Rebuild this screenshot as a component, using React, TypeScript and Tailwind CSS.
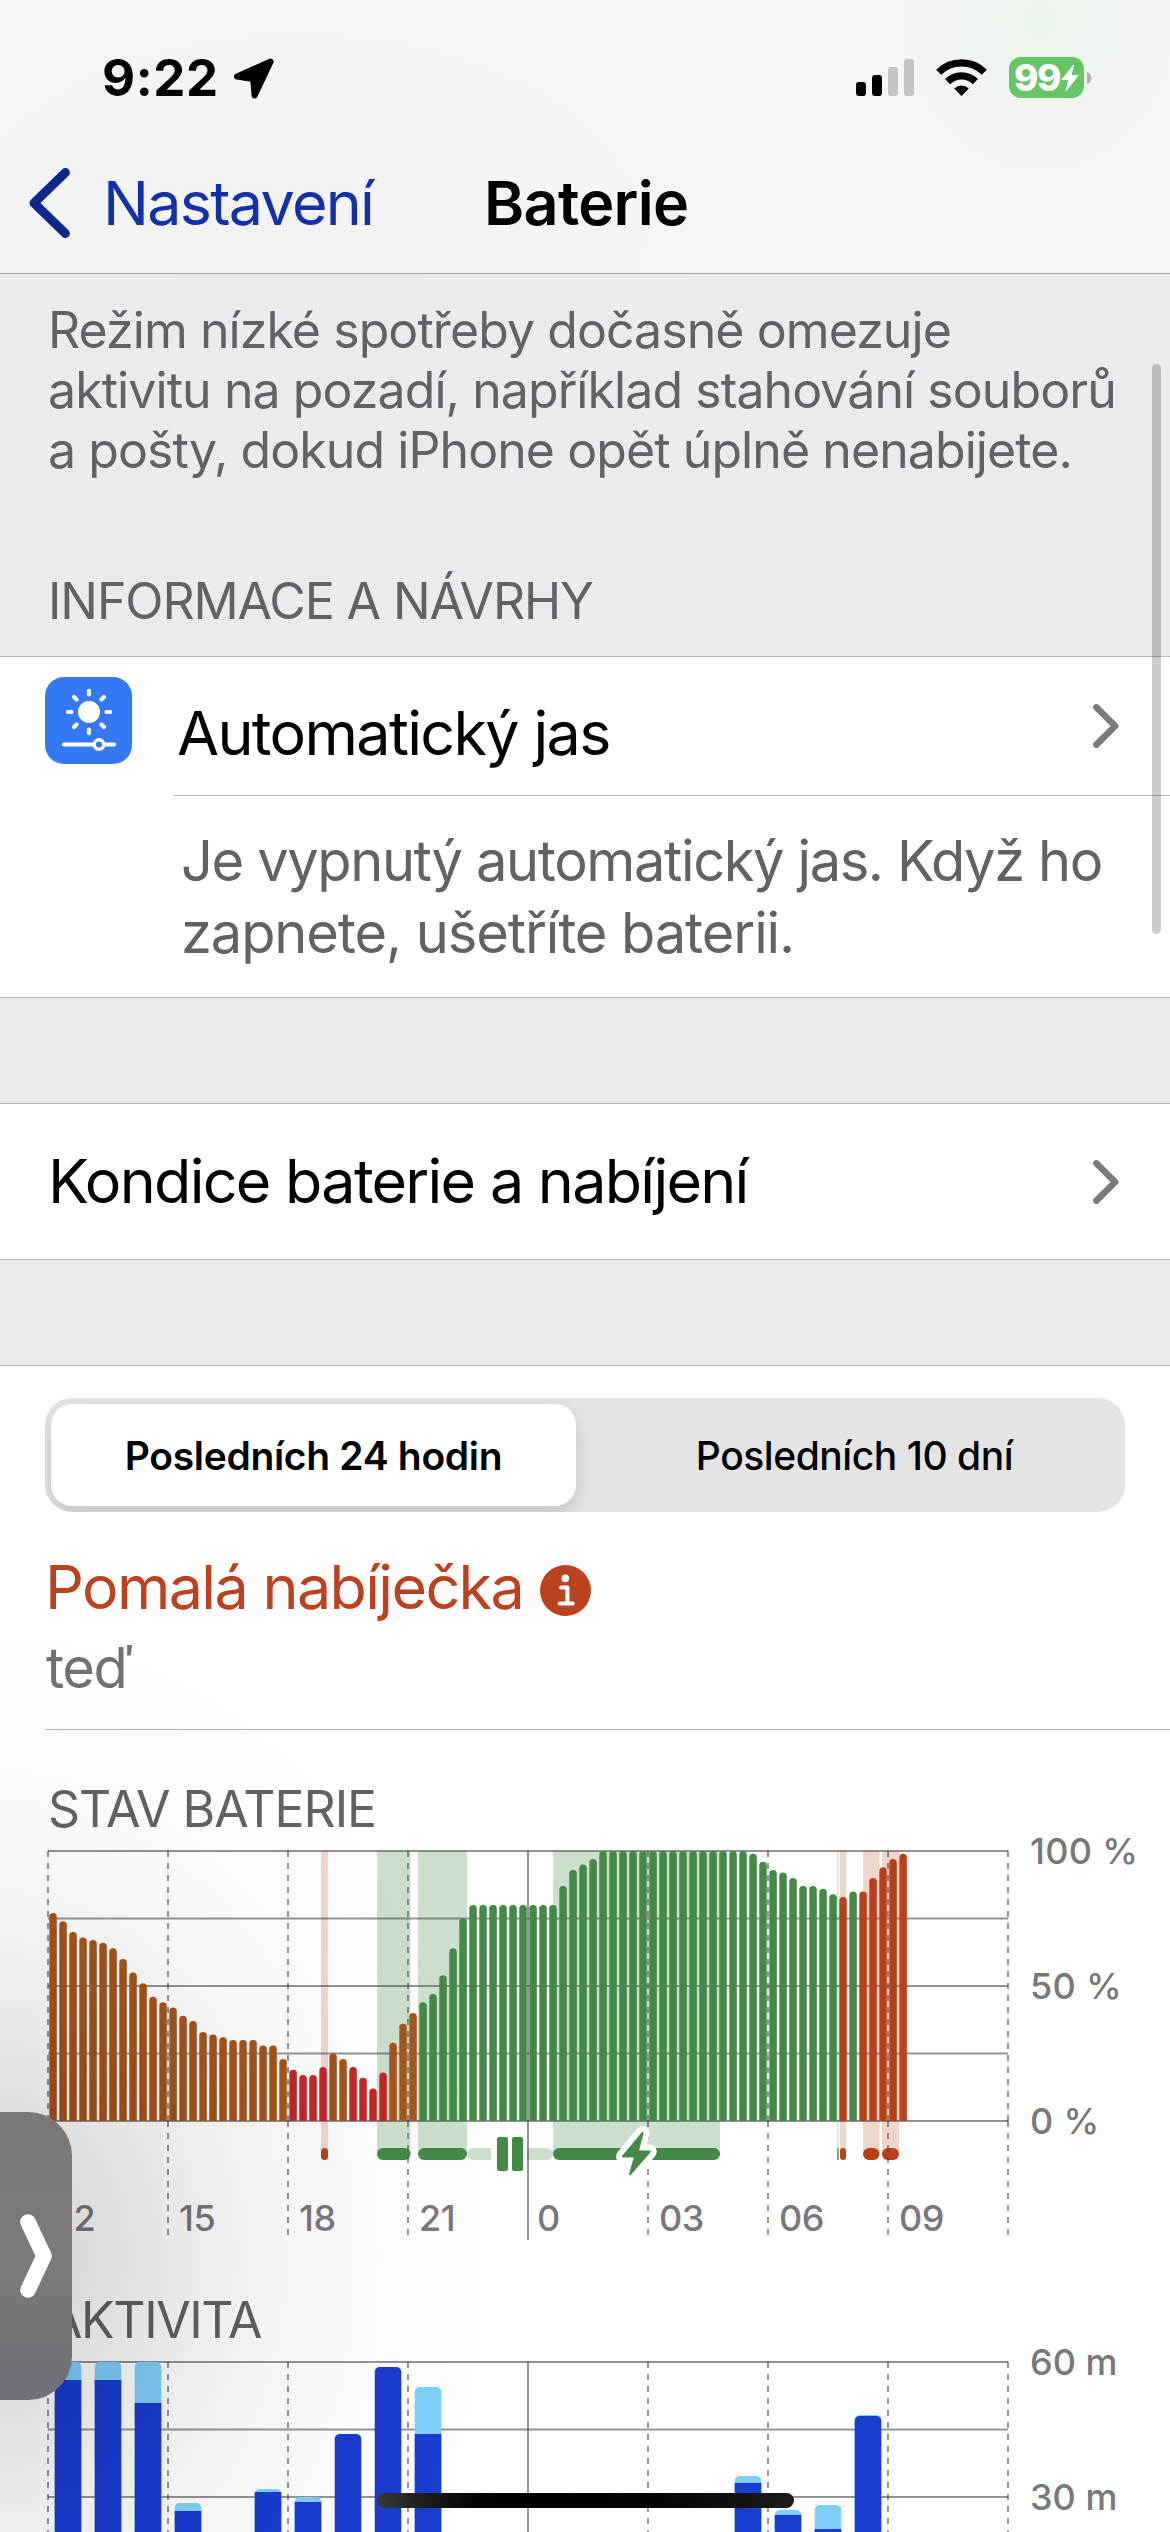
import { clsx } from "clsx";

const GREEN = "#448947";
const BROWN = "#a5541c";
const RED = "#c42726";
const RUST = "#ba401b";

const LEFT = 48;
const RIGHT = 1008;
const HOUR = 40;
const TOP = 12;
const PLOT_H = 270;
const BASE = TOP + PLOT_H;

const BOLT = "M642.6 294 623 317.4h12l-5 18 19.8-22.8h-12z";

// battery level in percent, one sample per 15 minutes
const levels = [
  77, 74, 70, 68, 67, 66, 64, 60, 55, 51, 46, 44, 42, 39, 37, 33, 32, 31, 30, 30, 30, 28, 28, 23,
  19, 17, 17, 20, 25, 23, 20, 16, 12, 18, 29, 36, 40, 44, 47, 54, 64, 75,
  80, 80, 80, 80, 80, 80, 80, 80, 80, 87, 93, 95, 97,
  100, 100, 100, 100, 100, 100, 100, 100, 100, 100, 100, 100, 100, 100, 100,
  99, 96, 93, 92, 90, 87, 87, 86, 84, 83, 85, 85, 90, 94, 97, 99,
];

const levelColor = (i: number) => {
  if (i === 79 || i >= 81) return RUST;
  if (i >= 37) return GREEN;
  if ((i >= 24 && i <= 27) || (i >= 30 && i <= 33)) return RED;
  return BROWN;
};

const charging = [
  { x: 321, w: 7, color: RUST },
  { x: 377, w: 33.5, color: GREEN },
  { x: 418, w: 49, color: GREEN },
  { x: 553, w: 167, color: GREEN },
  { x: 840, w: 6, color: RUST },
  { x: 863, w: 16.5, color: RUST },
  { x: 882, w: 17, color: RUST },
];

const hours = ["12", "15", "18", "21", "0", "03", "06", "09"];

// distance of the bar's top and of the dark part's top from the 60 m line
const activity = [
  { hour: 0, top: 0, dark: 18 },
  { hour: 1, top: 0, dark: 18 },
  { hour: 2, top: 0, dark: 41 },
  { hour: 3, top: 141, dark: 149 },
  { hour: 5, top: 127, dark: 130 },
  { hour: 6, top: 135, dark: 140 },
  { hour: 7, top: 72, dark: 72 },
  { hour: 8, top: 5, dark: 5 },
  { hour: 9, top: 25, dark: 72 },
  { hour: 17, top: 114, dark: 121 },
  { hour: 18, top: 148, dark: 153 },
  { hour: 19, top: 143, dark: 167 },
  { hour: 20, top: 53, dark: 54 },
];

function roundedBar(x: number, y: number, w: number, bottom: number, r: number) {
  return `M${x} ${bottom}V${y + r}a${r} ${r} 0 0 1 ${r} ${-r}h${w - 2 * r}a${r} ${r} 0 0 1 ${r} ${r}V${bottom}z`;
}

function Chevron({ className }: { className?: string }) {
  return (
    <svg className={clsx("shrink-0", className)} width="26" height="44" viewBox="0 0 26 44" fill="none" stroke="#7b7a7f" strokeWidth="6.6" strokeLinecap="round" strokeLinejoin="round">
      <path d="M3.4 3.4 22.2 22 3.4 40.6" />
    </svg>
  );
}

function StatusBar() {
  return (
    <div className="flex h-[155px] items-center pl-[102px]">
      <span className="w-[131px] text-[51px] leading-none font-bold tracking-[0.6px]">9:22</span>
      <svg width="41" height="41" viewBox="0 0 41 41" className="mt-0.5" stroke="#000" strokeWidth="6" strokeLinejoin="round">
        <path d="M37.6 3.6 4 18.6 20.2 21 21.6 37.4z" />
      </svg>
      <svg width="58" height="37" viewBox="0 0 58 37" className="ml-[582px]">
        <rect x="0" y="23" width="10" height="14" rx="3" />
        <rect x="16" y="16" width="10" height="21" rx="3" />
        <rect x="32" y="8" width="10" height="29" rx="3" fill="#c4c4c4" />
        <rect x="48" y="0" width="10" height="37" rx="3" fill="#c4c4c4" />
      </svg>
      <svg width="51" height="37" viewBox="0 0 51 37" className="ml-[22px]" fill="none" stroke="#000" strokeWidth="7.2">
        <path d="M2.7 13.3a32.5 32.5 0 0 1 45.6 0" />
        <path d="M11.6 22.6a19.6 19.6 0 0 1 27.8 0" />
        <path d="M18.2 29.5a10.3 10.3 0 0 1 14.6 0L25.5 37z" fill="#000" stroke="none" />
      </svg>
      <div className="ml-[22px] flex h-[41px] w-[75px] items-center rounded-[12px] bg-[#66c566] pl-[5px] text-white">
        <span className="w-[47px] text-[37px] leading-none font-extrabold tracking-[-1.6px]">99</span>
        <svg width="18" height="28" viewBox="0 0 18 28" className="shrink-0" fill="#fff" stroke="#fff" strokeWidth="1" strokeLinejoin="round">
          <path d="M12.5 1 1 15.5h7L5 27 17 11.5h-7z" />
        </svg>
      </div>
      <svg width="5" height="12" viewBox="0 0 5 12" className="ml-[3px]">
        <path d="M0 0c6 2 6 10 0 12z" fill="#b0b2b0" />
      </svg>
    </div>
  );
}

function Header() {
  return (
    <header className="h-[274px] border-b border-[#a5a5a8] bg-[#f6f6f6] bg-[radial-gradient(ellipse_170px_190px_at_1040px_20px,#ebf4eb,transparent),radial-gradient(ellipse_500px_300px_at_300px_240px,#f2f2f3,transparent)]">
      <StatusBar />
      <div className="flex h-24 items-center pl-[29px] text-[61px] leading-none">
        <div className="flex w-[455px] items-center text-[#1330a8]">
          <svg width="41" height="70" viewBox="0 0 41 70" fill="none" stroke="#0d278c" strokeWidth="9" strokeLinecap="round" strokeLinejoin="round">
            <path d="M36.4 4.6 5 35l31.4 30.4" />
          </svg>
          <span className="ml-[33px] tracking-[-1.7px]">Nastavení</span>
        </div>
        <h1 className="font-semibold tracking-[-0.67px]">Baterie</h1>
      </div>
    </header>
  );
}

function BrightnessIcon() {
  return (
    <svg width="87" height="87" viewBox="0 0 87 87" className="mt-5 ml-[45px] shrink-0">
      <rect width="87" height="87" rx="19" fill="#3478f6" />
      <circle cx="44" cy="35" r="11" fill="#fff" />
      <g stroke="#fff" strokeWidth="4.2" strokeLinecap="round">
        {[0, 45, 90, 135, 180, 225, 270, 315].map((a) => (
          <path key={a} d="M44 17.5v-3.6" transform={`rotate(${a} 44 35)`} />
        ))}
        <path d="M19 67.5h50" />
      </g>
      <circle cx="54" cy="67.5" r="4.8" fill="#3478f6" stroke="#fff" strokeWidth="3.4" />
    </svg>
  );
}

function Suggestion() {
  return (
    <section className="flex h-[342px] border-y border-[#b7b7ba] bg-white">
      <BrightnessIcon />
      <div className="ml-[42px] flex-1">
        <div className="flex h-[139px] items-start justify-between border-b border-[#b7b7ba] pr-[51px] pl-[3px]">
          <span className="mt-[46px] text-[61px] leading-[60px] tracking-[-1.65px]">Automatický jas</span>
          <Chevron className="mt-[47px]" />
        </div>
        <p className="mt-[29px] ml-[7px] text-[56px] leading-[72px] text-[#626266]">
          <span className="block whitespace-nowrap tracking-[-1.4px]">Je vypnutý automatický jas. Když ho</span>
          <span className="block whitespace-nowrap tracking-[-1.11px]">zapnete, ušetříte baterii.</span>
        </p>
      </div>
    </section>
  );
}

function Segmented() {
  return (
    <div className="mx-[45px] flex h-[114px] overflow-hidden rounded-[27px] bg-[#e4e4e4] p-1.5 text-[39px] leading-none">
      <div className="flex w-[525px] items-center justify-center rounded-[21px] bg-white font-semibold tracking-[-0.32px] shadow-[0_8px_18px_rgba(0,0,0,0.14)]">
        Posledních 24 hodin
      </div>
      <div className="flex flex-1 items-center justify-center pl-[14px] font-medium tracking-[-0.45px]">Posledních 10 dní</div>
    </div>
  );
}

function Grid({ bottom, rowBottom }: { bottom: number; rowBottom: number }) {
  const rows = [0, 67.5, 135, 202.5, 270].filter((r) => TOP + r <= rowBottom);
  return (
    <g stroke="#3c3c43" strokeOpacity="0.55" strokeWidth="2">
      {rows.map((r) => (
        <path key={r} d={`M${LEFT} ${TOP + r}H${RIGHT}`} />
      ))}
      {[0, 1, 2, 3, 4, 5, 6, 7, 8].map((i) => {
        const x = LEFT + i * HOUR * 3;
        return i === 4 ? (
          <path key={i} d={`M${x} ${TOP}V${bottom}`} />
        ) : (
          <path key={i} d={`M${x} ${TOP}V${Math.min(BASE, bottom)}M${x} ${BASE}V${Math.max(BASE, bottom - 5)}`} strokeDasharray="6 6" />
        );
      })}
    </g>
  );
}

function BatteryChart() {
  return (
    <svg width="1170" height="402" viewBox="0 0 1170 402" className="block overflow-visible">
      {charging.map((c) => (
        <g key={c.x} fill={c.color}>
          <rect x={c.x} y={TOP} width={c.w} height="303" fillOpacity={c.color === GREEN ? 0.27 : 0.22} />
          <rect x={c.x} y="309" width={c.w} height="12" rx={Math.min(6, c.w / 2)} />
        </g>
      ))}
      <rect x="837" y={TOP} width="2" height="297" fill={GREEN} fillOpacity="0.18" />
      <rect x="837" y="309" width="2" height="12" fill={GREEN} fillOpacity="0.7" />
      <rect x="467" y="309" width="86" height="12" rx="6" fill={GREEN} fillOpacity="0.27" />
      <Grid bottom={401} rowBottom={BASE} />
      {levels.map((v, i) => (
        <path key={i} d={roundedBar(49.3 + i * 10, BASE - v * 2.7, 7.5, BASE, 3.7)} fill={levelColor(i)} />
      ))}
      <rect x="491" y="290" width="36" height="46" fill="#fff" />
      <g fill={GREEN}>
        <rect x="497" y="298" width="11" height="34" rx="2" />
        <rect x="512" y="298" width="11" height="34" rx="2" />
      </g>
      <g strokeLinejoin="round">
        <path d={BOLT} fill="#fff" stroke="#fff" strokeWidth="14" />
        <path d={BOLT} fill={GREEN} stroke={GREEN} strokeWidth="2" />
      </g>
      <g className="text-[36px] font-medium" fill="#78777c">
        {hours.map((h, i) => (
          <text key={h} x={LEFT + i * HOUR * 3 + (h === "0" ? 9 : 11)} y="392" className="tracking-[-0.4px]">{h}</text>
        ))}
        <text x="1030" y={TOP + 13} className="tracking-[0.3px]">100 %</text>
        <text x="1030" y={TOP + 148} className="tracking-[0.3px]">50 %</text>
        <text x="1030" y={TOP + 283} className="tracking-[0.3px]">0 %</text>
      </g>
    </svg>
  );
}

function ActivityChart() {
  return (
    <svg width="1170" height="182" viewBox="0 0 1170 182" className="block overflow-visible">
      <Grid bottom={190} rowBottom={182} />
      {activity.map(({ hour, top, dark }) => {
        const x = 54.7 + hour * HOUR;
        return (
          <g key={hour}>
            <path d={roundedBar(x, TOP + top, 26.6, 190, 5)} fill={top === dark ? "#193cd1" : "#80cffb"} />
            {top !== dark && (dark - top > 2 ? (
              <rect x={x} y={TOP + dark} width="26.6" height={190 - TOP - dark} fill="#193cd1" />
            ) : (
              <path d={roundedBar(x, TOP + dark, 26.6, 190, 5)} fill="#193cd1" />
            ))}
          </g>
        );
      })}
      <g className="text-[36px] font-medium" fill="#78777c">
        <text x="1030" y={TOP + 13}>60 m</text>
        <text x="1030" y={TOP + 148}>30 m</text>
      </g>
    </svg>
  );
}

function Usage() {
  return (
    <section className="border-t border-[#b7b7ba] bg-white pt-8">
      <Segmented />
      <div className="ml-[45px] h-[218px] border-b border-[#b7b7ba]">
        <div className="flex items-center pt-[39px] text-[61px] leading-[72px] text-[#bb421f]">
          <span className="w-[495px] tracking-[-1.65px]">Pomalá nabíječka</span>
          <svg width="51" height="51" viewBox="0 0 51 51" className="mt-[7px]">
            <circle cx="25.5" cy="25.5" r="25.5" fill="#bb421f" />
            <circle cx="25.3" cy="13.4" r="3.8" fill="#fff" />
            <path d="M21 22.5h6.4v16M19.6 38.5h13.2" fill="none" stroke="#fff" strokeWidth="4" strokeLinecap="round" strokeLinejoin="round" />
          </svg>
        </div>
        <p className="mt-[9px] ml-px text-[56px] leading-[72px] tracking-[-1.4px] text-[#717175]">teď</p>
      </div>
      <h2 className="mt-[49px] ml-12 text-[50px] leading-[60px] tracking-[-1.05px] text-[#626266]">STAV BATERIE</h2>
      <BatteryChart />
      <h2 className="mt-[49px] ml-12 text-[50px] leading-[60px] tracking-[-1.4px] text-[#626266]">AKTIVITA</h2>
      <ActivityChart />
    </section>
  );
}

// collapsed picture-in-picture tab at the screen's edge
function SideTab() {
  return (
    <>
      <div className="pointer-events-none absolute top-[1560px] left-0 h-[972px] w-[620px] bg-[radial-gradient(ellipse_500px_640px_at_0px_696px,rgba(0,0,0,0.18),rgba(0,0,0,0.12)_24%,rgba(0,0,0,0.07)_42%,rgba(0,0,0,0.03)_62%,rgba(0,0,0,0.01)_80%,transparent)]" />
      <div className="absolute top-[2112px] left-0 flex h-72 w-[72px] items-center rounded-r-[44px] bg-linear-to-b from-[#7b7774] via-[#7b7b79] to-[#6e7078] pl-5">
        <svg width="32" height="84" viewBox="0 0 32 84" fill="none" stroke="#fff" strokeWidth="15.6" strokeLinecap="round" strokeLinejoin="round">
          <path d="M8 8 24 42 8 76" />
        </svg>
      </div>
    </>
  );
}

export default function App() {
  return (
    <main className="relative h-[2532px] w-[1170px] overflow-hidden bg-[#eaeaef] font-['Inter','Liberation_Sans',sans-serif] text-black">
      <Header />
      <p className="pt-[26px] pl-12 text-[50px] leading-[60px] tracking-[-0.92px] whitespace-nowrap text-[#626166]">
        Režim nízké spotřeby dočasně omezuje
        <br />
        aktivitu na pozadí, například stahování souborů
        <br />
        a pošty, dokud iPhone opět úplně nenabijete.
      </p>
      <h2 className="mt-[91px] mb-[25px] ml-12 text-[50px] leading-[60px] tracking-[-1.1px] text-[#626166]">INFORMACE A NÁVRHY</h2>
      <Suggestion />
      <section className="my-[105px] flex h-[157px] items-center justify-between border-y border-[#b7b7ba] bg-white pr-[51px] pl-12 text-[61px] leading-none tracking-[-1.72px]">
        Kondice baterie a nabíjení
        <Chevron />
      </section>
      <Usage />
      <div className="absolute top-[364px] left-[1152px] h-[570px] w-[9px] rounded-full bg-black/20" />
      <SideTab />
      <div className="absolute top-[2493px] left-[377px] h-[15px] w-[417px] rounded-full bg-linear-to-r from-[#383838] via-black via-35% to-[#1c1c1c]" />
    </main>
  );
}
